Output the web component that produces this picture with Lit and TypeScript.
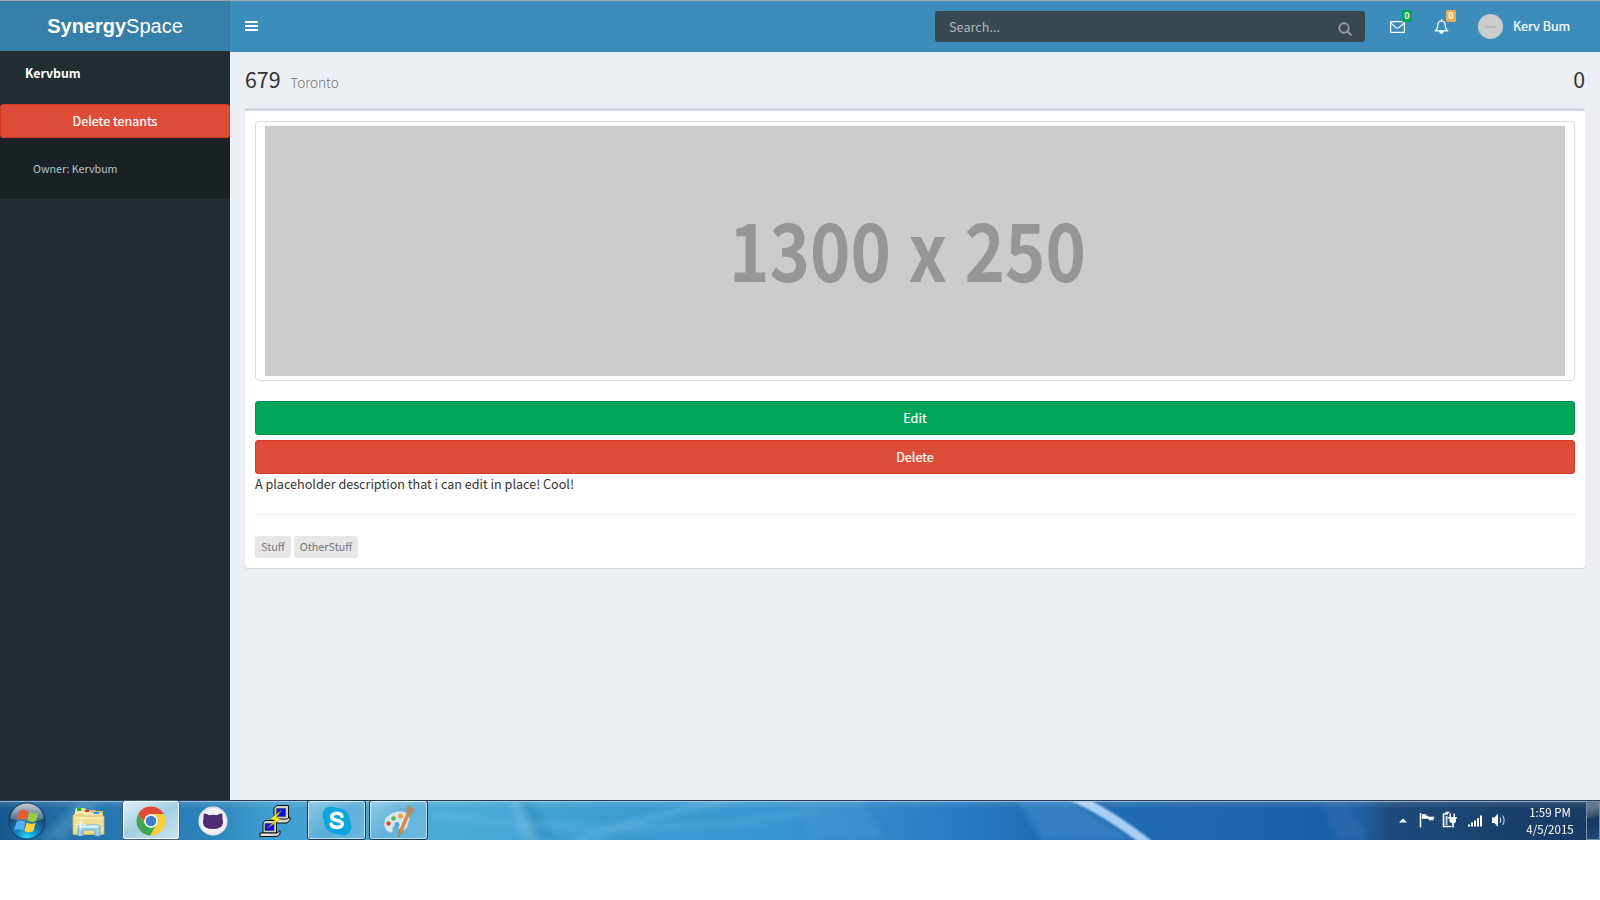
import { LitElement, html, css, svg } from "lit";
import { customElement } from "lit/decorators.js";

const FONT = css`"Noto Sans CJK SC", "Open Sans", sans-serif`;

@customElement("top-bar")
class TopBar extends LitElement {
  static styles = css`
    :host { display: block; font: 12.6px/20px ${FONT}; color: #fff; }
    * { box-sizing: border-box; }
    .bar { display: flex; height: 52px; border-top: 1px solid #a3a9ad; background: #3c8dbc; }
    .logo { width: 230px; height: 50px; background: #367fa9; display: flex; justify-content: center; align-items: center;
      font: 20px/50px "Liberation Sans", Arial, sans-serif; }
    .logo b { font-weight: 700; }
    .nav { flex: 1; display: flex; height: 51px; }
    .burger { margin: 20px 0 0 15px; width: 13px; height: 10px; display: flex; flex-direction: column; justify-content: space-between; }
    .burger i { height: 2px; background: #fff; }
    .search { margin: 10px 0 0 auto; width: 430px; height: 31px; border-radius: 3px; background: #374850; color: #b4b9bb;
      padding: 0 13px 0 14px; display: flex; justify-content: space-between; align-items: center; letter-spacing: .05px; }
    .search svg { margin: 5px 0 0 0; }
    .notice { position: relative; margin-top: 18px; height: 16px; }
    .mail { margin-left: 25px; width: 15px; }
    .bell { margin-left: 29px; width: 15px; }
    .badge { position: absolute; top: -9px; width: 10px; height: 12px; border-radius: 2px; font: bold 9px/12px ${FONT}; text-align: center; }
    .green { left: 12px; background: #00a65a; }
    .orange { left: 12px; background: #f0ad4e; }
    .avatar { margin: 13px 10px 0 29px; width: 25px; height: 25px; border-radius: 50%; background: #ccc; display: flex; align-items: center; justify-content: center; }
    .avatar i { width: 11px; border-top: 2px dashed #b8b8b8; }
    .user { width: 87px; line-height: 50px; white-space: nowrap; -webkit-text-stroke: .2px; }
    svg { display: block; }
  `;
  render() {
    return html`<header class="bar">
      <div class="logo"><b>Synergy</b><span>Space</span></div>
      <div class="nav">
        <div class="burger"><i></i><i></i><i></i></div>
        <div class="search"><span>Search...</span>
          <svg width="14" height="14" viewBox="0 0 14 14" fill="none" stroke="#999" stroke-width="2"><circle cx="6" cy="6" r="4.7"/><path d="M9.4 9.4l3.4 3.5" stroke-linecap="round"/></svg>
        </div>
        <div class="notice mail">
          <svg width="15" height="16" viewBox="0 0 15 16" fill="none" stroke="#fff" stroke-width="1.2"><rect x=".6" y="2.6" width="13.8" height="10.800" rx=".6"/><path d="M1 4.200l5 4.400q1.500 1.300 3 0l5-4.400"/></svg>
          <span class="badge green">0</span>
        </div>
        <div class="notice bell">
          <svg width="15" height="16" viewBox="0 0 15 16" fill="none" stroke="#fff" stroke-width="1.2"><path d="M7.500 1.800c-2.600.3-3.700 2.200-3.700 4.300 0 3-.9 4.600-2.600 5.800h12.600c-1.700-1.200-2.600-2.800-2.600-5.800 0-2.100-1.100-4-3.700-4.300z" stroke-linejoin="round"/><path d="M7.500 0v2"/><path d="M5.900 12.400a1.600 1.800 0 0 0 3.200 0z" fill="#fff"/></svg>
          <span class="badge orange">0</span>
        </div>
        <div class="avatar"><i></i></div>
        <div class="user">Kerv Bum</div>
      </div>
    </header>`;
  }
}

@customElement("side-bar")
class SideBar extends LitElement {
  static styles = css`
    :host { display: block; width: 230px; margin-top: -1px; background: #222d32; font: 12.6px/20px ${FONT}; color: #fff; }
    * { box-sizing: border-box; }
    .name { height: 53px; padding: 12px 25px 0; font-weight: 700; font-size: 12.300px; }
    .remove { height: 34px; border: 1px solid #d73925; border-radius: 3px; background: #dd4b39; text-align: center; line-height: 31px; -webkit-text-stroke: .2px; }
    .owner { height: 61px; padding: 18px 33px 0; background: #1a2226; color: #b8c7ce; font-size: 10.700px; line-height: 26px; }
  `;
  render() {
    return html`<div class="name">Kervbum</div><div class="remove">Delete tenants</div><div class="owner">Owner: Kervbum</div>`;
  }
}

@customElement("tenant-page")
class TenantPage extends LitElement {
  static styles = css`
    :host { display: block; flex: 1; padding: 0 15px; background: #ecf0f5; font: 12.6px/20px ${FONT}; color: #333; }
    * { box-sizing: border-box; }
    .head { height: 56px; display: flex; justify-content: space-between; padding-top: 13px; line-height: 28px; font-size: 21.400px; }
    .head small { font-size: 13.600px; font-weight: 300; color: #777; margin-left: 9.500px; }
    .box { height: 460px; background: #fff; border-top: 3px solid #d2d6de; border-radius: 3px; box-shadow: 0 1px 1px rgba(0,0,0,.1); padding: 10px; }
    .thumb { height: 260px; border: 1px solid #ddd; border-radius: 4px; padding: 4px 9px; margin-bottom: 20px; }
    .picture { display: block; width: 1300px; height: 250px; background: #ccc; }
    .picture text { font: bold 80px ${FONT}; fill: #969696; word-spacing: 2px; }
    .btn { height: 34px; border: 1px solid; border-radius: 3px; color: #fff; text-align: center; line-height: 31px; -webkit-text-stroke: .2px; }
    .edit { background: #00a65a; border-color: #008d4c; margin-bottom: 5px; }
    .delete { background: #dd4b39; border-color: #d73925; }
    .desc { height: 41px; border-bottom: 1px solid #eee; margin-bottom: 21px; }
    .tags { display: flex; gap: 3px; }
    .tag { height: 22px; border-radius: 3px; background: #e7e7e7; color: #777; padding: 0 6px; font-size: 10.800px; line-height: 21px; }
  `;
  render() {
    return html`<div class="head"><div>679<small>Toronto</small></div><div>0</div></div>
    <section class="box">
      <div class="thumb"><svg class="picture" viewBox="0 0 1300 250">
        <text x="464" y="156" textLength="357" lengthAdjust="spacingAndGlyphs">1300 x 250</text>
      </svg></div>
      <div class="btn edit">Edit</div>
      <div class="btn delete">Delete</div>
      <div class="desc">A placeholder description that i can edit in place! Cool!</div>
      <div class="tags"><span class="tag">Stuff</span><span class="tag">OtherStuff</span></div>
    </section>`;
  }
}

const wallpaper = svg`
  <defs>
    <linearGradient id="sky"><stop offset="0" stop-color="#17588f"/><stop offset=".05" stop-color="#2474ad"/><stop offset=".13" stop-color="#2d82bb"/><stop offset=".17" stop-color="#409fd1"/><stop offset=".28" stop-color="#4eacd9"/><stop offset=".38" stop-color="#3e9cd2"/><stop offset=".48" stop-color="#3a96d1"/><stop offset=".56" stop-color="#2f84c4"/><stop offset=".6" stop-color="#277bc3"/><stop offset=".65" stop-color="#1f6db0"/><stop offset=".71" stop-color="#1f6bb1"/><stop offset=".83" stop-color="#1b60a7"/><stop offset=".85" stop-color="#2260a2"/><stop offset=".87" stop-color="#1c4a7b"/><stop offset="1" stop-color="#173961"/></linearGradient>
    <linearGradient id="shade" x2="0" y2="1"><stop offset="0" stop-color="#fff" stop-opacity=".16"/><stop offset=".5" stop-color="#fff" stop-opacity="0"/></linearGradient>
    <filter id="soft" x="-20%" y="-40%" width="140%" height="180%"><feGaussianBlur stdDeviation="3"/></filter>
    <filter id="edge" x="-20%" y="-40%" width="140%" height="180%"><feGaussianBlur stdDeviation="1.300"/></filter>
  </defs>
  <rect width="1600" height="40" fill="url(#sky)"/>
  <g filter="url(#soft)">
    <path d="M40 40L80 0h22L64 40z" fill="#7bb9dc" opacity=".3"/>
    <path d="M508 0h12l20 40h-18z" fill="#8cccec" opacity=".3"/>
    <path d="M518 0h12l30 40h-24z" fill="#237eb3" opacity=".35"/>
    <path d="M430 14q210 30 390-4" fill="none" stroke="#8bd0f0" stroke-width="6" opacity=".2"/>
    <path d="M575 42Q650 14 745-3" fill="none" stroke="#a1daf4" stroke-width="6" opacity=".25"/>
    <path d="M797 0h64l24 40h-75z" fill="#4c9bd2" opacity=".4"/>
    <path d="M1018 0h52l64 40h-92z" fill="#438fd0" opacity=".55"/>
    <path d="M1320 0h26l22 40h-30z" fill="#3470b2" opacity=".4"/>
  </g>
  <path d="M1071-4Q1108 12 1151 46" fill="none" stroke="#a9d0f5" stroke-width="9" filter="url(#edge)"/>
  <rect width="1600" height="18" fill="url(#shade)"/>
  <path d="M0 .5h1600" stroke="#283c58"/><path d="M0 1.500h1600" stroke="#b9d0e2" opacity=".7"/>`;

const orb = html`<svg width="38" height="38" viewBox="0 0 38 38">
  <defs><radialGradient id="o" cx=".5" cy="1" r=".9"><stop offset="0" stop-color="#29e4ff"/><stop offset=".35" stop-color="#1489c4"/><stop offset=".75" stop-color="#174b77"/><stop offset="1" stop-color="#35536e"/></radialGradient>
  <linearGradient id="g" x2="0" y2="1"><stop stop-color="#fff" stop-opacity=".7"/><stop offset="1" stop-color="#fff" stop-opacity=".15"/></linearGradient></defs>
  <circle cx="19" cy="19" r="18" fill="url(#o)" stroke="#153b5b"/><path d="M2.500 17a16.500 15.500 0 0 1 33 0q-16 5-33 0z" fill="url(#g)"/>
  <path d="M11.500 9q5-2.700 9 .3l-2.500 9q-4.500-2.500-9-.3z" fill="#ef592b"/><path d="M21.600 10q4.500 2.500 9 .5l-2.500 8.500q-4.500 2.200-9-.5z" fill="#9acb3c"/>
  <path d="M8.600 19.700q4.500-2.200 9 .3l-2.500 8.500q-4.300-2.500-8.900-.4z" fill="#54b1ef"/><path d="M18.700 20.500q4.500 2.500 9 .3l-2.500 8.500q-4.500 2.200-8.900-.4z" fill="#ffd238"/>
</svg>`;
const folder = html`<svg width="34" height="32" viewBox="0 0 34 32">
  <path d="M3 5l1-3h9l2 2h8l1 1h7v24H1z" fill="#d9bc69"/><path d="M4 2h8l1 3h6l1 2h10v4H2z" fill="#f6e7aa"/>
  <path d="M5 2h4v3H5z" fill="#16b522"/><path d="M13 4h4v2h-4z" fill="#d43b20"/><path d="M22 6h5v2h-5z" fill="#268fe5"/>
  <path d="M1 9h10l1 1h20v18H1z" fill="#f2df96" stroke="#d3b667" stroke-width=".7"/><path d="M3 12h28" stroke="#fff4c4"/>
  <path d="M6 30V21q0-2 2-2h18q2 0 2 2v9h-5v-6H11v6z" fill="#9bd1ec" stroke="#5a9dca" stroke-width=".8"/><path d="M7.500 20.500h19" stroke="#e4f8ff" stroke-width="2"/>
  <path d="M8.500 13v11M3 18.500h11M5 15l7 7M12 15l-7 7" stroke="#fff" stroke-width=".6"/>
</svg>`;
const chrome = html`<svg width="30" height="30" viewBox="0 0 30 30">
  <circle cx="15" cy="15" r="14.500" fill="#f8d13a"/><path d="M2.400 7.800A14.500 14.500 0 0 1 27.800 8H15a7 7 0 0 0-6.600 9z" fill="#df4936"/>
  <path d="M2.400 7.800A14.500 14.500 0 0 0 14 29.500l6.500-11a7 7 0 0 1-11.500 0z" fill="#3aa757"/><circle cx="15" cy="15" r="6.700" fill="#fff"/><circle cx="15" cy="15" r="5.300" fill="#3e82cf"/>
</svg>`;
const cat = html`<svg width="30" height="30" viewBox="0 0 30 30"><circle cx="15" cy="15" r="14.500" fill="#f4f2f6"/><circle cx="15" cy="15" r="13.600" fill="none" stroke="#d9d8e2"/>
  <path d="M6 7.500q3-.2 5 1.700 4-.8 8 0 2-1.900 5-1.700 1 2.500.3 4.500.9 2 .7 5-.6 6-10 6T5 17q-.2-3 .7-5Q5 10 6 7.500z" fill="#512b76"/></svg>`;
const putty = html`<svg width="34" height="34" viewBox="0 0 34 34">
  <g stroke="#111" fill="#d2d2cd"><path d="M16 4l3-2.500h11.500V14l-2 2H16z"/><path d="M13 17l2-2h14l3-2v3l-3 3H13z"/><path d="M5 19l2-2.500h11.500V29H5z"/><path d="M2 29h17l3-2.500v3.500l-3 2.500H2z"/></g>
  <path d="M18.500 4.500h9v8h-9zM7 19.500h9v7H7z" fill="#1010dc" stroke="#333" stroke-width=".5"/><path d="M4 30.500h8M16 17.500h8" stroke="#fff"/>
  <path d="M24 6l-12 9 5 1.500-8 8 14-9.500-5-1.500z" fill="#fff21b" stroke="#6b6800" stroke-width=".5"/>
</svg>`;
const skype = html`<svg width="32" height="32" viewBox="0 0 32 32"><g fill="#0ca4df"><circle cx="16" cy="16" r="13"/><circle cx="10" cy="10" r="8.500"/><circle cx="22" cy="22" r="8.500"/></g>
  <path d="M21 11.200q-1-3-5.200-3-5 .1-5 3.500 0 2.700 4.700 3.600 5.700.9 5.700 3.900t-5.500 3.200q-4.600 0-5.600-3.300" fill="none" stroke="#fff" stroke-width="3.600" stroke-linecap="round"/></svg>`;
const paint = html`<svg width="34" height="32" viewBox="0 0 34 32">
  <path d="M2 20Q1 12 10 8q9-4 15 0 4 3 2 9-1 7-6 9-3 1-4-2 0-3-3-3-4 0-3 4 0 4-4 2-4-1-5-7z" fill="#d6e8f1" stroke="#8db2c6" stroke-width=".8"/>
  <circle cx="6.500" cy="18.500" r="2.300" fill="#e04b36"/><circle cx="11.500" cy="13.500" r="2.300" fill="#54b84b"/><circle cx="18.500" cy="11" r="2.500" fill="#f2a23a"/><circle cx="15" cy="19.500" r="2.500" fill="#50a8d6"/>
  <path d="M28 8l-8.500 20-3 4 .5-5L25.500 7z" fill="#ee9037" stroke="#a65d22" stroke-width=".5"/><path d="M25 8q-1-6 1-8 2 2 7 4-2 5-5 5z" fill="#b68a60"/>
</svg>`;

@customElement("task-bar")
class TaskBar extends LitElement {
  static styles = css`
    :host { display: grid; height: 40px; overflow: hidden; font: 11.300px/17px ${FONT}; color: #fff; }
    * { box-sizing: border-box; }
    .back, .row { grid-area: 1 / 1; }
    svg { display: block; flex: none; }
    .row { display: flex; height: 40px; z-index: 1; }
    .slot { height: 40px; display: flex; align-items: center; justify-content: center; flex: none; padding-top: 1px; }
    .start { width: 54px; } .files { width: 68px; padding: 3px 0 0 1px; } .git { width: 66px; } .ssh { width: 61px; padding-right: 4px; }
    .open { width: 59px; height: 40px; border: 1px solid #18384f; border-radius: 3px; box-shadow: inset 0 0 0 1px rgba(255,255,255,.6); background: linear-gradient(135deg, rgba(255,255,255,.4), rgba(255,255,255,.12) 50%, rgba(255,255,255,.2)); margin-right: 3px; }
    .active { width: 58px; margin: 0; border-color: #3e617b; box-shadow: inset 0 0 0 1px rgba(255,255,255,.9); background: linear-gradient(150deg, #e2eff5, #a5cfe2 50%, #c8e5f1); }
    .tray { margin-left: auto; display: flex; align-items: center; }
    .clock { width: 70px; text-align: center; margin-left: 8px; padding-top: 1px; font-size: 11.500px; white-space: nowrap; }
    .desktop { align-self: flex-end; width: 14px; height: 39px; border: 1px solid #7890aa; margin-left: 1px; background: linear-gradient(165deg, #66798f 15%, #3a5270 38%, #17365c 45%, #20487a); }
  `;
  render() {
    return html`<svg class="back" width="1600" height="40">${wallpaper}</svg>
    <div class="row">
      <div class="slot start">${orb}</div><div class="slot files">${folder}</div><div class="slot open active">${chrome}</div>
      <div class="slot git">${cat}</div><div class="slot ssh">${putty}</div><div class="slot open">${skype}</div><div class="slot open">${paint}</div>
      <div class="tray">
        <svg width="108" height="22" viewBox="0 0 108 22" fill="#fff">
          <path d="M0 13.500l4-4 4 4z"/>
          <path d="M21.500 4v14.500" stroke="#fff" stroke-width="1.500"/><path d="M22.500 5h5v1.500h2v1h6l-1 4h-5v-1.500h-7z" stroke="#17375c" stroke-width=".4"/>
          <path d="M49 5h-4.500v12.500h8M46.500 3.500h4" fill="none" stroke="#fff" stroke-width="1.600"/><path d="M46.500 7h2v9h-2z" opacity=".75"/><path d="M50.500 4.500h1.500v4h-1.500zM54.500 4.500h1.500v4h-1.500zM48.500 8h9.500v1.500h-1v3.500l-2 1.500v4h-1.700v-4l-2.800-1.500V9.500h-2z"/>
          <path d="M69 15.500h2v2h-2zM72 13.500h2v4h-2zM75 11.500h2v6h-2zM78 9h2v8.500h-2zM81 6.500h2v11h-2z"/>
          <path d="M93 8.500h2.500l3.500-4v13.500l-3.500-4H93z"/><path d="M101 8.500q1.600 2.700 0 5.400M103.500 6.500q3.300 4.700 0 9.400" fill="none" stroke="#fff" stroke-width=".9"/>
        </svg>
        <div class="clock"><div>1:59 PM</div><div>4/5/2015</div></div>
        <div class="desktop"></div>
      </div>
    </div>`;
  }
}

@customElement("app-root")
class AppRoot extends LitElement {
  static styles = css`
    :host { display: flex; flex-direction: column; width: 1600px; height: 900px; background: #fff; overflow: hidden; }
    .body { display: flex; height: 748px; flex: none; }
  `;
  render() {
    return html`<top-bar></top-bar><div class="body"><side-bar></side-bar><tenant-page></tenant-page></div><task-bar></task-bar>`;
  }
}
